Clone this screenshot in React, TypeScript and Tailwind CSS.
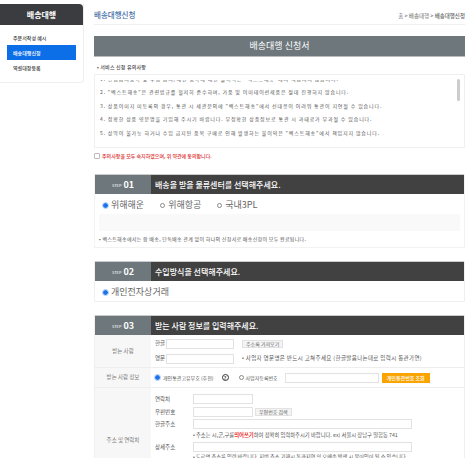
import React from "react";

const notices = [
  "2. \"벡스트해송\"은 관련법규를 철저히 준수하며, 가품 및 이미테이션제품은 절대 진행하지 않습니다.",
  "3. 상품이미지 미등록의 경우, 통관 시 세관문의에 \"벡스트해송\"에서 선대응이 어려워 통관이 지연될 수 있습니다.",
  "4. 정확한 상품 영문명을 기입해 주시기 바랍니다. 부정확한 상품정보로 통관 시 과태료가 부과될 수 있습니다.",
  "5. 상막이 불가능 하거나 수입 금지된 품목 구매로 인해 발생하는 불이익은 \"벡스트해송\"에서 책임지지 않습니다.",
];

const Radio = ({ on = false }: { on?: boolean }) => (
  <span
    className={`inline-block w-[5px] h-[5px] rounded-full shrink-0 ${
      on ? "bg-[#1a73e8] outline outline-1 outline-[#a9c9f5]" : "border border-[#888] bg-white"
    }`}
  />
);

const StepHead = ({ num, title }: { num: string; title: string }) => (
  <div className="flex h-5 border-t border-[#ccc]">
    <div className="w-14 bg-[#6d777c] flex items-center justify-center gap-[2px] text-white">
      <span className="text-[4px]">STEP</span>
      <span className="text-[9px] font-bold leading-none">{num}</span>
    </div>
    <div className="flex-1 bg-[#414141] flex items-center pl-1 text-white text-[8px] font-medium">{title}</div>
  </div>
);

const Input = ({ className = "" }: { className?: string }) => (
  <div className={`h-[10px] border border-[#e2e2e2] bg-white ${className}`} />
);

const SmallBtn = ({ children }: { children: React.ReactNode }) => (
  <div className="h-2 px-[3px] flex items-center bg-[#f4f4f4] border border-[#e2e2e2] text-[5px] text-[#666] whitespace-nowrap">
    {children}
  </div>
);

const Label = ({ children }: { children: React.ReactNode }) => (
  <div className="w-14 shrink-0 bg-[#f7f7f7] flex items-center justify-center text-[5.5px] text-[#777]">
    {children}
  </div>
);

export default function App() {
  return (
    <div
      className="w-[466px] h-[458px] overflow-hidden bg-white flex items-start"
      style={{ fontFamily: '"Noto Sans CJK KR", "Noto Sans", sans-serif' }}
    >
      {/* Sidebar */}
      <aside className="w-[84px] shrink-0 mt-1 rounded-br border border-t-0 border-l-0 border-[#eee] h-[79px]">
        <div className="h-[21px] bg-[#3a3c40] rounded-tr flex items-center justify-center text-white text-[8px] font-bold">
          배송대행
        </div>
        <div className="mt-[5px] px-[7px] text-[5px] text-[#444] font-medium">
          <div className="h-[15px] flex items-center pl-[6px]">주문서작성 예시</div>
          <div className="h-[15px] flex items-center pl-[6px] bg-[#0d6fe8] text-white">배송대행신청</div>
          <div className="h-[15px] flex items-center pl-[6px]">역설대장등록</div>
        </div>
      </aside>

      {/* Content */}
      <main className="ml-[10px] w-[371px] shrink-0">
        <div className="h-[25px] border-b border-[#f0f0f0] flex items-center justify-between pt-[5px]">
          <h1 className="text-[7.5px] font-medium text-[#3f6ea8]">배송대행신청</h1>
          <div className="text-[5.5px] text-[#666] mt-[3px]">
            홈 &gt; 배송대행 &gt; <span className="font-medium">배송대행신청</span>
          </div>
        </div>

        <div className="mt-[11px] h-[21px] bg-[#6d777c] border-b border-[#bbb] flex items-center justify-center text-white text-[9px]">
          배송대행 신청서
        </div>

        <div className="mt-[5px] h-[10px] flex items-center text-[5px] tracking-[0.2px] text-[#444] pl-[3px] font-medium">
          • 서비스 신청 유의사항
        </div>

        <div className="h-[74px] border border-[#f0f0f0] relative mt-[2px] text-[5px] tracking-[0.85px] text-[#555] pt-[5px]">
          <div className="h-[66px] overflow-hidden">
            <div className="-mt-[8px] pl-[5px] leading-[13.4px] whitespace-nowrap">
              <div>1. 반입금지품목 및 수입 금지/제한 품목에 대한 불이익은 "벡스트해송"에서 책임지지 않습니다.</div>
              {notices.map((n) => (
                <div key={n}>{n}</div>
              ))}
            </div>
          </div>
          <div className="absolute right-[4px] top-[4px] w-[3px] h-[22px] bg-[#ccc] rounded-sm" />
        </div>

        <label className="mt-[3px] h-[10px] flex items-center gap-[2px] -ml-[2px] pl-[2px] text-[5px] text-[#d33] font-medium">
          <span className="w-[6px] h-[6px] border border-[#bbb] rounded-[1px] bg-white" />
          주의사항을 모두 숙지하였으며, 위 약관에 동의합니다.
        </label>

        {/* Step 01 */}
        <section className="mt-[13px] border-b border-x border-[#f2f2f2]">
          <StepHead num="01" title="배송을 받을 물류센터를 선택해주세요." />
          <div className="h-[20px] flex items-center pl-2 pt-[2px] gap-4 text-[9px] text-[#666]">
            <span className="flex items-center gap-[3px]"><Radio on />위해해운</span>
            <span className="flex items-center gap-[3px]"><Radio />위해항공</span>
            <span className="flex items-center gap-[3px]"><Radio />국내3PL</span>
          </div>
          <div className="mx-1 h-[17px] bg-[#f9f9f9]" />
          <div className="h-[16px] flex items-center pl-1 text-[5px] tracking-[0.3px] text-[#555]">
            • 벡스트해송에서는 합 배송, 단독배송 관계 없이 하나의 신청서로 배송신청이 모두 완료됩니다.
          </div>
        </section>

        {/* Step 02 */}
        <section className="mt-[13px] border-b border-x border-[#f0f0f0]">
          <StepHead num="02" title="수입방식을 선택해주세요." />
          <div className="h-[20px] flex items-center pl-2 pt-[2px] text-[9px] text-[#666]">
            <span className="flex items-center gap-[3px]"><Radio on />개인전자상거래</span>
          </div>
        </section>

        {/* Step 03 */}
        <section className="mt-[13px] border-x border-[#f0f0f0]">
          <StepHead num="03" title="받는 사람 정보를 입력해주세요." />

          <div className="flex h-[33px] border-b border-[#eee]">
            <Label>받는 사람</Label>
            <div className="flex-1 pl-1 text-[5.5px] text-[#555] flex flex-col justify-center gap-[5px]">
              <div className="flex items-center">
                <span className="w-[11px]">한글</span>
                <Input className="w-[68px]" />
                <div className="ml-2"><SmallBtn>주소록 가져오기</SmallBtn></div>
              </div>
              <div className="flex items-center">
                <span className="w-[11px]">영문</span>
                <Input className="w-[68px]" />
                <span className="ml-2 text-[5.5px] tracking-[0.35px] whitespace-nowrap">
                  • 사업자 영문명은 반드시 고쳐주세요 (한글발음나는대로 입력시 통관가연)
                </span>
              </div>
            </div>
          </div>

          <div className="flex h-[20px] border-b border-[#eee]">
            <Label>받는 사람 정보</Label>
            <div className="flex-1 pl-1 flex items-center text-[5px] text-[#555] whitespace-nowrap">
              <Radio on />
              <span className="ml-[3px]">개인통관고유부호 (추천)</span>
              <span className="ml-2 w-[7px] h-[7px] rounded-full border border-[#333] flex items-center justify-center text-[5px] font-bold text-[#333]">?</span>
              <span className="ml-[10px]"><Radio /></span>
              <span className="ml-[2px]">사업자등록번호</span>
              <Input className="ml-[7px] w-[94px] bg-[#fafafa]" />
              <div className="ml-[3px] h-[10px] w-12 justify-center bg-[#f9a400] text-white flex items-center font-medium">개인통관번호 조회</div>
            </div>
          </div>

          <div className="flex h-[104px]">
            <Label>주소 및 연락처</Label>
            <div className="flex-1 pl-1 pt-[6px] text-[5.5px] text-[#555]">
              <div className="flex items-center h-[10px]">
                <span className="w-[38px]">연락처</span>
                <Input className="w-[60px]" />
              </div>
              <div className="flex items-center h-[10px] mt-[3px]">
                <span className="w-[38px]">우편번호</span>
                <Input className="w-[60px]" />
                <div className="ml-[2px]"><SmallBtn>우편번호 검색</SmallBtn></div>
              </div>
              <div className="flex items-center h-[10px] mt-[2px]">
                <span className="w-[38px]">한글주소</span>
                <Input className="w-[219px]" />
              </div>
              <div className="pl-[38px] h-[13px] flex items-center text-[5.3px] whitespace-nowrap">
                • 주소는 시,군,구를 <span className="text-[#e33] font-bold">띄어쓰기</span>하여 정확히 입력하주시기 바랍니다. ex) 서울시 장남구 밀힘동 741
              </div>
              <div className="flex items-center h-[10px]">
                <span className="w-[38px]">상세주소</span>
                <Input className="w-[219px]" />
              </div>
              <div className="pl-[38px] h-[9px] flex items-center text-[5.2px] whitespace-nowrap">
                • 도로명 주소를 입력 바랍니다. 지번 주소 기재시 통관지연 및 오배송 발생 시 불이익이 될 수 있습니다.
              </div>
            </div>
          </div>
        </section>
      </main>
    </div>
  );
}
